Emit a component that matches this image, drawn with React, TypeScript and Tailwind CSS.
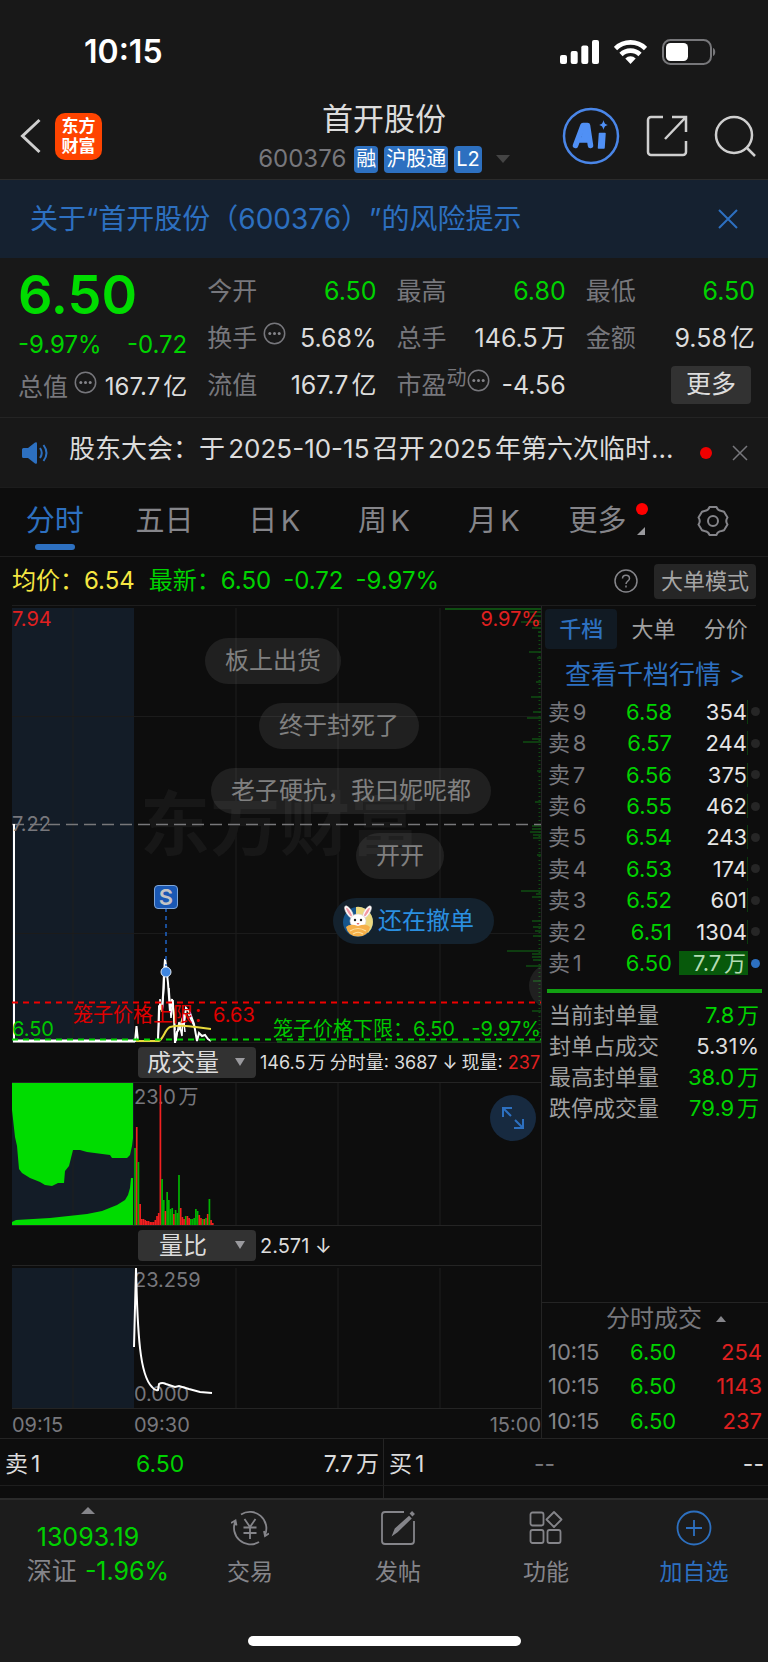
import type { ReactNode } from 'react'

interface Level {
  label: string
  price: string
  volume: string
}

const SELL_LEVELS: Level[] = [
  { label: '卖9', price: '6.58', volume: '354' },
  { label: '卖8', price: '6.57', volume: '244' },
  { label: '卖7', price: '6.56', volume: '375' },
  { label: '卖6', price: '6.55', volume: '462' },
  { label: '卖5', price: '6.54', volume: '243' },
  { label: '卖4', price: '6.53', volume: '174' },
  { label: '卖3', price: '6.52', volume: '601' },
  { label: '卖2', price: '6.51', volume: '1304' },
  { label: '卖1', price: '6.50', volume: '7.7万' },
]

const LIMIT_STATS = [
  { label: '当前封单量', value: '7.8万', color: 'text-[#00d200]' },
  { label: '封单占成交', value: '5.31%', color: 'text-[#dcdcdc]' },
  { label: '最高封单量', value: '38.0万', color: 'text-[#00d200]' },
  { label: '跌停成交量', value: '79.9万', color: 'text-[#00d200]' },
]

const TRADES = [
  { time: '10:15', price: '6.50', volume: '254' },
  { time: '10:15', price: '6.50', volume: '1143' },
  { time: '10:15', price: '6.50', volume: '237' },
]

const PERIODS = ['分时', '五日', '日K', '周K', '月K']

// price distribution on the right edge: [y, length]
const DEPTH: [number, number][] = [
  [4, 15], [8, 9], [14, 20], [20, 9], [24, 3], [28, 3], [44, 12], [50, 4], [74, 5], [89, 10],
  [104, 8], [110, 14], [131, 9], [134, 18], [163, 4], [194, 6], [218, 9], [221, 9], [224, 11],
  [227, 8], [230, 8], [247, 4], [283, 20], [286, 5], [289, 9], [313, 9], [319, 8], [323, 6],
  [328, 8], [343, 34], [346, 9], [349, 9], [352, 8], [358, 15], [373, 8], [403, 9],
]

// minute volume bars after the open: [top, rising]
const VOLUME: [number, boolean][] = [
  [65, false], [44, true], [79, false], [121, true], [136, true], [136, true], [137, true],
  [138, true], [138, true], [139, true], [139, true], [139, true], [137, true], [133, true],
  [130, true], [2, true], [96, false], [117, false], [128, true], [109, false], [117, false],
  [126, false], [125, false], [131, true], [127, false], [130, false], [92, false], [125, true],
  [134, true], [136, true], [133, false], [133, true], [135, true], [136, false], [136, false],
  [135, false], [126, false], [128, false], [132, true], [135, true], [136, false], [136, true],
  [135, false], [131, true], [116, false], [137, true], [140, true],
]

function InfoDots() {
  return (
    <svg className="h-[23px] w-[23px] shrink-0" viewBox="0 0 23 23" fill="none" stroke="#77777c">
      <circle cx="11.5" cy="11.5" r="10.2" strokeWidth="1.5" />
      <g fill="#85858a" stroke="none">
        <circle cx="6.8" cy="11.5" r="1.5" />
        <circle cx="11.5" cy="11.5" r="1.5" />
        <circle cx="16.2" cy="11.5" r="1.5" />
      </g>
    </svg>
  )
}

function StatusBar() {
  return (
    <div className="flex h-24 items-center justify-between pl-[84px] pr-[52px] pt-[7px]">
      <span className="text-[32px] font-semibold leading-none text-white">10:15</span>
      <div className="flex items-center gap-[15px]">
        <svg className="h-6 w-[39px]" viewBox="0 0 39 24" fill="#fff">
          <rect x="0" y="15" width="7" height="9" rx="2" />
          <rect x="10.7" y="11" width="7" height="13" rx="2" />
          <rect x="21.3" y="5.500" width="7" height="18.500" rx="2" />
          <rect x="32" y="0" width="7" height="24" rx="2" />
        </svg>
        <svg className="h-6 w-[33px]" viewBox="0 0 33 24" fill="none" stroke="#fff" strokeWidth="4.600">
          <path d="M1.500 8.500a21.500 21.500 0 0 1 30 0" />
          <path d="M7 14.500a13.500 13.500 0 0 1 19 0" />
          <path d="M16.500 24l-5.200-5.600a7.500 7.500 0 0 1 10.400 0z" fill="#fff" stroke="none" />
        </svg>
        <svg className="h-[26px] w-[54px]" viewBox="0 0 54 26">
          <rect x="1" y="1" width="48" height="24" rx="7.500" fill="none" stroke="#77777a" strokeWidth="2" />
          <rect x="4" y="4" width="22" height="18" rx="4.500" fill="#fff" />
          <path d="M51 9c3 1 3 7 0 8z" fill="#77777a" />
        </svg>
      </div>
    </div>
  )
}

function Tag({ children }: { children: ReactNode }) {
  return (
    <span className="flex h-[27px] items-center rounded bg-[#2d70c0] px-[2px] text-[20px] leading-none text-white">
      {children}
    </span>
  )
}

function NavBar() {
  return (
    <div className="grid h-[84px] grid-cols-[1fr_auto_1fr] items-center border-b border-[#2b2b2b] px-3 pb-[3px]">
      <div className="flex items-center gap-[13px] pl-2">
        <button type="button" aria-label="返回">
          <svg className="h-9 w-[22px]" viewBox="0 0 22 36" fill="none" stroke="#cfcfcf" strokeWidth="3">
            <path d="M19.500 2L2.500 18l17 16" />
          </svg>
        </button>
        <div className="flex h-[47px] w-[47px] flex-col items-center justify-center rounded-[10px] bg-[#ff4400] text-[17px] font-bold leading-[20px] text-white">
          <span>东方</span>
          <span>财富</span>
        </div>
      </div>
      <div className="flex flex-col items-center gap-[6px]">
        <h1 className="text-[31px] leading-10 text-[#dcdcdc]">首开股份</h1>
        <div className="flex h-7 items-center gap-[6px]">
          <span className="mr-[2px] text-[24px] text-[#77777c]">600376</span>
          <Tag>融</Tag>
          <Tag>沪股通</Tag>
          <Tag>L2</Tag>
          <svg className="ml-2 h-2 w-[14px]" viewBox="0 0 14 8" fill="#444">
            <path d="M0 0h14L7 8z" />
          </svg>
        </div>
      </div>
      <div className="flex items-center justify-end gap-[26px]">
        <button type="button" aria-label="AI 助手">
          <svg className="h-[58px] w-[58px]" viewBox="0 0 58 58" fill="#5090f5">
            <circle cx="29" cy="29" r="27" fill="none" stroke="#4a86e8" strokeWidth="2.500" />
            <path
              d="M13.500 38.500L21 18.500h4.500l3 20M17 33h10"
              fill="none"
              stroke="#5090f5"
              strokeWidth="5.500"
              strokeLinejoin="round"
              strokeLinecap="round"
            />
            <path d="M22 19h3l2 13h-8z" />
            <path d="M37.500 26.500h5.500l-1 14.500h-5.500z" stroke="#5090f5" strokeWidth="1.500" strokeLinejoin="round" />
            <path d="M41.500 13c.8 3.400 1.500 4.200 4.500 5-3 .9-3.700 1.700-4.500 5-.8-3.300-1.500-4.100-4.500-5 3-.8 3.700-1.600 4.500-5z" />
          </svg>
        </button>
        <button type="button" aria-label="分享">
          <svg className="h-[42px] w-[42px]" viewBox="0 0 42 42" fill="none" stroke="#cfcfcf" strokeWidth="2.500">
            <path d="M17 2H5a3 3 0 0 0-3 3v32a3 3 0 0 0 3 3h32a3 3 0 0 0 3-3V26" />
            <path d="M26 2h14v15M40 2L19 24" />
          </svg>
        </button>
        <button type="button" aria-label="搜索">
          <svg className="h-[42px] w-[42px]" viewBox="0 0 42 42" fill="none" stroke="#cfcfcf" strokeWidth="2.500">
            <circle cx="20" cy="20" r="18" />
            <path d="M32.500 32.500L41 41" />
          </svg>
        </button>
      </div>
    </div>
  )
}

function RiskBanner() {
  return (
    <div className="flex h-[78px] items-center justify-between bg-[#152130] pl-[30px] pr-[30px] text-[#2d70c0]">
      <a href="#risk" className="text-[28px] leading-none">
        关于“首开股份（600376）”的风险提示
      </a>
      <button type="button" aria-label="关闭提示">
        <svg className="h-5 w-5" viewBox="0 0 20 20" fill="none" stroke="currentColor" strokeWidth="2">
          <path d="M1 1l18 18M19 1L1 19" />
        </svg>
      </button>
    </div>
  )
}

interface CellProps {
  label: string
  value: string
  info?: boolean
  sup?: string
  green?: boolean
}

function QuoteCell({ label, value, info, sup, green }: CellProps) {
  return (
    <div className="flex h-[47px] items-center justify-between whitespace-nowrap text-[25px] leading-none">
      <span className="flex items-center text-[#77777c]">
        {label}
        {sup && <span className="pb-4 text-[20px]">{sup}</span>}
        {info && (
          <span className={sup ? 'pb-[10px]' : 'pb-[10px] pl-[6px]'}>
            <InfoDots />
          </span>
        )}
      </span>
      <span className={green ? 'text-[#00d200]' : 'text-[#dcdcdc]'}>{value}</span>
    </div>
  )
}

function QuotePanel() {
  return (
    <section className="grid grid-cols-4 gap-5 border-b border-[#242424] pb-2 pl-[18px] pr-[13px] pt-[10px]">
      <div>
        <div className="flex h-[54px] items-center text-[54px] font-semibold leading-none text-[#00dc00]">6.50</div>
        <div className="flex h-[46px] items-center justify-between text-[24px] text-[#00d200]">
          <span>-9.97%</span>
          <span>-0.72</span>
        </div>
        <div className="flex h-[38px] items-center justify-between whitespace-nowrap text-[25px] leading-none">
          <span className="flex items-center gap-[6px] text-[#77777c]">
            总值
            <span className="pb-[10px]">
              <InfoDots />
            </span>
          </span>
          <span className="text-[24px] text-[#dcdcdc]">167.7亿</span>
        </div>
      </div>
      <div>
        <QuoteCell label="今开" value="6.50" green />
        <QuoteCell label="换手" value="5.68%" info />
        <QuoteCell label="流值" value="167.7亿" />
      </div>
      <div>
        <QuoteCell label="最高" value="6.80" green />
        <QuoteCell label="总手" value="146.5万" />
        <QuoteCell label="市盈" sup="动" value="-4.56" info />
      </div>
      <div>
        <QuoteCell label="最低" value="6.50" green />
        <QuoteCell label="金额" value="9.58亿" />
        <div className="flex h-[45px] items-center justify-end pr-1">
          <button type="button" className="h-[38px] w-[80px] rounded bg-[#323232] text-[25px] leading-none text-[#dcdcdc]">
            更多
          </button>
        </div>
      </div>
    </section>
  )
}

function Notice() {
  return (
    <section className="flex h-[70px] items-center border-b border-[#1c1c1c] pl-[22px] pr-5">
      <svg className="h-[22px] w-[26px] shrink-0" viewBox="0 0 26 22" fill="#2d70c0">
        <path d="M0 7.500Q0 6 1.500 6H6l7-5.500q2-1 2 1v19q0 2-2 1L6 16H1.500Q0 16 0 14.500z" />
        <path d="M18 6q3.500 5 0 10M21.500 3q6 8 0 16" fill="none" stroke="#2d70c0" strokeWidth="2" />
      </svg>
      <a href="#notice" className="ml-[21px] min-w-0 flex-1 whitespace-nowrap pb-2 text-[26px] leading-none text-[#dcdcdc]">
        股东大会：于2025-10-15召开2025年第六次临时...
      </a>
      <span className="ml-4 h-3 w-3 rounded-full bg-[#f00000]" />
      <button type="button" aria-label="关闭公告" className="ml-5">
        <svg className="h-4 w-4" viewBox="0 0 16 16" fill="none" stroke="#77777c" strokeWidth="1.500">
          <path d="M1 1l14 14M15 1L1 15" />
        </svg>
      </button>
    </section>
  )
}

function PeriodTabs() {
  return (
    <nav className="grid h-[69px] grid-cols-7 border-b border-[#1e1e1e] pb-[2px] text-[29px] text-[#85858a]">
      {PERIODS.map((name, i) => (
        <button
          key={name}
          type="button"
          className={i === 0 ? 'relative text-[#2d70c0]' : 'relative'}
        >
          {name}
          {i === 0 && <span className="absolute bottom-1 left-1/2 h-[6px] w-10 -translate-x-1/2 rounded-full bg-[#2d70c0]" />}
        </button>
      ))}
      <button type="button" className="flex items-center justify-center pr-3">
        <span className="relative">
          更多
          <span className="absolute -right-[22px] top-1 h-3 w-3 rounded-full bg-[#ff0000]" />
          <svg className="absolute -right-[19px] bottom-2 h-2 w-2" viewBox="0 0 8 8" fill="#9a9a9e">
            <path d="M8 0v8H0z" />
          </svg>
        </span>
      </button>
      <button type="button" aria-label="设置" className="flex items-center justify-center">
        <svg className="h-8 w-8" viewBox="0 0 32 32" fill="none" stroke="#85858a" strokeWidth="2">
          <path
            d="M12.500 2h7q1 3.500 5 4l2.500.8 3.500 5.700q-2.500 3.500 0 7L27 25.200l-2.500.8q-4 .5-5 4h-7q-1-3.500-5-4L5 25.200 1.500 19.500q2.500-3.500 0-7L5 6.800 7.500 6q4-.5 5-4z"
            strokeLinejoin="round"
          />
          <circle cx="16" cy="16" r="5" />
        </svg>
      </button>
    </nav>
  )
}

function Summary() {
  return (
    <div className="mx-3 flex h-[49px] items-center border-b border-[#1e1e1e] text-[24px] leading-none text-[#00d200]">
      <span className="text-[#f5e642]">均价：6.54</span>
      <span className="ml-[14px]">最新：6.50</span>
      <span className="ml-3">-0.72</span>
      <span className="ml-3">-9.97%</span>
      <button type="button" aria-label="帮助" className="ml-auto">
        <svg className="h-6 w-6" viewBox="0 0 24 24" fill="none" stroke="#85858a" strokeWidth="1.500">
          <circle cx="12" cy="12" r="11" />
          <path d="M8.500 9.500c0-4.500 7-4.500 7 0 0 2.500-3.500 2.500-3.500 5.500M12 16.500v2" />
        </svg>
      </button>
      <button type="button" className="ml-4 h-[35px] rounded bg-[#262626] px-[7px] text-[22px] text-[#a5a5a5]">
        大单模式
      </button>
    </div>
  )
}

function Bubble({ className, children }: { className: string; children: ReactNode }) {
  return (
    <div className={`absolute flex h-[46px] items-center whitespace-nowrap rounded-full text-[24px] leading-none ${className}`}>
      {children}
    </div>
  )
}

function Rabbit() {
  return (
    <svg className="h-8 w-8" viewBox="0 0 32 32">
      <circle cx="16" cy="17" r="15" fill="#16558c" />
      <path d="M14 2a15 15 0 0 1 12 26L14 18z" fill="#ecd980" />
      <g fill="#fff" stroke="#d8d0d0" strokeWidth=".6">
        <ellipse cx="7" cy="7" rx="2.800" ry="7" transform="rotate(-32 7 7)" />
        <ellipse cx="25" cy="7" rx="2.800" ry="7" transform="rotate(32 25 7)" />
        <ellipse cx="16" cy="16" rx="8" ry="7" />
      </g>
      <ellipse cx="7" cy="7" rx="1.200" ry="5" fill="#f29aa5" transform="rotate(-32 7 7)" />
      <ellipse cx="25" cy="7" rx="1.200" ry="5" fill="#f29aa5" transform="rotate(32 25 7)" />
      <circle cx="13" cy="15" r="1.200" fill="#222" />
      <circle cx="19" cy="15" r="1.200" fill="#222" />
      <path d="M14.500 18h3L16 20z" fill="#d66" />
      <path d="M4 22q4-4 12-1 8-3 12 1-2 9.500-12 9.500T4 22z" fill="#f5b04a" />
      <path d="M8 26q8-5 16 0M11 29q5-3.500 10 0" stroke="#ffdf9a" strokeWidth="1.200" fill="none" />
    </svg>
  )
}

// vertical time grid shared by the three charts
function TimeGrid({ height }: { height: number }) {
  return (
    <>
      <rect width="122" height={height} fill="#131c27" />
      <path
        d={`M61 0V${height}M224 0V${height}M326 0V${height}M428 0V${height}`}
        stroke="#1f1f1f"
        strokeWidth="1"
      />
    </>
  )
}

function PriceChart() {
  return (
    <div className="relative mt-[2px] h-[435px] overflow-hidden text-[20px] leading-none">
      <svg className="absolute inset-0 h-full w-full" viewBox="0 0 529 435" preserveAspectRatio="none">
        <TimeGrid height={435} />
        <path d="M0 108.500H529M0 325.500H529M0 434.500H529" stroke="#1b1b1b" />
      </svg>
      <div className="absolute left-[128px] top-[182px] text-[70px] font-bold text-[#171717]">东方财富</div>
      <svg className="absolute inset-0 h-full w-full" viewBox="0 0 529 435" preserveAspectRatio="none" fill="none">
        <path d="M433 1H529" stroke="#0f4d12" strokeWidth="2" />
        <path d={DEPTH.map(([y, len]) => `M529 ${y}h-${len}`).join('')} stroke="#0f4d12" strokeWidth="1.300" />
        <path d="M527.500 0V435" stroke="#0f4d12" strokeWidth="2" strokeDasharray="1 3" />
        <path d="M265 434H529" stroke="#0f5a12" strokeWidth="2" />
        <path d="M0 216.500H529" stroke="#77777a" strokeWidth="1.500" strokeDasharray="12 6" />
        <path d="M1 433H123" stroke="#fff" strokeWidth="3" />
        <path
          d="M2 216V433H123L124.500 418 126 433H146L147 399 150 402 151 387 152 365 153 351 154 357 156 375 158 404 160 391 162 408 163 435 165 424 168 420 170 412 172 416 174 400 178 405 182 416 185 433 187 425 190 428 193 427 196 431 199 433"
          stroke="#fff"
          strokeWidth="2"
        />
        <path
          d="M146 433L148 391 150 404 152 380 153 352M157 380L159 410 161 392 163 422M164 433L167 414 170 428 171 405 173 424M176 405L183 420"
          stroke="#fff"
          strokeWidth="1.500"
        />
        <path d="M124 433H147C152 430 153 421 158 419C170 416 180 419 199 421" stroke="#e8da3c" strokeWidth="2" />
        <path d="M0 394.500H529" stroke="#f00000" strokeWidth="2" strokeDasharray="6 5" />
        <path d="M0 431.500H529" stroke="#00d200" strokeWidth="2" strokeDasharray="6 5" />
        <path d="M154 300V358" stroke="#1f64c8" strokeWidth="1.500" strokeDasharray="4 4" />
        <circle cx="154" cy="364" r="5" fill="#3f86e0" stroke="#dfe8f5" />
      </svg>
      <span className="absolute left-0 top-0 leading-[22px] text-[#e02020]">7.94</span>
      <span className="absolute right-0 top-0 leading-[22px] text-[#e02020]">9.97%</span>
      <span className="absolute left-0 top-[206px] text-[#77777c]">7.22</span>
      <span className="absolute left-0 top-[411px] text-[#00c800]">6.50</span>
      <span className="absolute left-[61px] top-[397px] text-[#e00000]">笼子价格上限：6.63</span>
      <span className="absolute left-[261px] top-[411px] text-[#00c800]">笼子价格下限：6.50</span>
      <span className="absolute right-0 top-[411px] text-[#00c800]">-9.97%</span>
      <span className="absolute left-[142px] top-[277px] flex h-6 w-6 items-center justify-center rounded border border-[#7fa6d8] bg-[#1a58b4] text-[22px] font-semibold text-[#c4c4c4]">
        S
      </span>
      <Bubble className="left-[193px] top-[30px] bg-[#cccccc]/10 px-5 text-[#808080]">板上出货</Bubble>
      <Bubble className="left-[247px] top-[95px] bg-[#cccccc]/10 px-5 text-[#808080]">终于封死了</Bubble>
      <Bubble className="left-[199px] top-[160px] bg-[#cccccc]/10 px-5 text-[#808080]">老子硬抗，我曰妮呢都</Bubble>
      <Bubble className="left-[344px] top-[225px] bg-[#cccccc]/10 px-5 text-[#808080]">开开</Bubble>
      <Bubble className="left-[321px] top-[290px] gap-1 bg-[#14222e] pl-[9px] pr-5 text-[#2a8fe0]">
        <Rabbit />
        还在撤单
      </Bubble>
      <span className="absolute -right-9 top-[355px] h-[46px] w-12 rounded-full bg-[#cccccc]/10" />
    </div>
  )
}

interface ToolbarProps {
  id: string
  name: string
  children: ReactNode
}

function IndicatorBar({ id, name, children }: ToolbarProps) {
  return (
    <div className="flex h-10 items-center border-b border-[#242424] pl-[126px] text-[#dcdcdc]">
      <div className="relative">
        <select
          id={id}
          aria-label="指标"
          defaultValue={name}
          className="block h-[31px] w-[118px] appearance-none rounded bg-[#323232] pr-7 text-center text-[24px] leading-none"
        >
          <option>{name}</option>
        </select>
        <svg className="pointer-events-none absolute right-[11px] top-[11px] h-2 w-[10px]" viewBox="0 0 10 8" fill="#9a9a9e">
          <path d="M0 0h10L5 8z" />
        </svg>
      </div>
      <div className="ml-1 flex items-center whitespace-nowrap leading-none">{children}</div>
    </div>
  )
}

function VolumeChart() {
  return (
    <div className="relative h-[142px] text-[20px] leading-none">
      <svg className="absolute inset-0 h-full w-full" viewBox="0 0 529 142" preserveAspectRatio="none">
        <TimeGrid height={142} />
        <path
          d="M0 0V27L3 54 5 63 7 86 10 90 18 95 28 99 33 102 40 103 46 100 52 100 53 88 57 83 59 75 61 67 68 67 75 69 98 72 100 75 115 75 118 72 120 63 121 55V0z"
          fill="#00dc00"
        />
        <path d="M0 142V139L4 137 38 135 75 131 90 128 105 122 113 117 116 112 118 105 119 95H121V142z" fill="#00dc00" />
      </svg>
      <span className="absolute left-[122px] top-1 text-[#77777c]">23.0万</span>
      <svg className="absolute inset-0 h-full w-full" viewBox="0 0 529 142" preserveAspectRatio="none">
        {VOLUME.map(([top, up], i) => (
          <rect key={i} x={122.2 + i * 1.69} y={top} width="1.700" height={142 - top} fill={up ? '#f22020' : '#00b400'} />
        ))}
      </svg>
      <button
        type="button"
        aria-label="全屏"
        className="absolute right-[5px] top-3 flex h-[46px] w-[46px] items-center justify-center rounded-full bg-[#172a40]"
      >
        <svg className="h-6 w-6" viewBox="0 0 24 24" fill="none" stroke="#2d70c0" strokeWidth="2">
          <path d="M2 11V2h9M2 2l8 8M22 13v9h-9M22 22l-8-8" />
        </svg>
      </button>
    </div>
  )
}

function RatioChart() {
  return (
    <div className="relative mt-[2px] h-[140px] text-[20px] leading-none text-[#77777c]">
      <svg className="absolute inset-0 h-full w-full" viewBox="0 0 529 140" preserveAspectRatio="none">
        <TimeGrid height={140} />
      </svg>
      <span className="absolute left-[122px] top-[2px]">23.259</span>
      <span className="absolute left-[122px] top-[116px]">0.000</span>
      <svg className="absolute inset-0 h-full w-full" viewBox="0 0 529 140" preserveAspectRatio="none">
        <path
          d="M122 79L124 0C125 45 126 62 128 80C130 98 133 112 140 119Q143 123 146 122L147 116Q150 114 154 116L163 119 167 118 177 121 188 124 200 125"
          fill="none"
          stroke="#fff"
          strokeWidth="2"
        />
      </svg>
    </div>
  )
}

function OrderBook() {
  return (
    <aside className="flex w-[227px] shrink-0 flex-col border-l border-[#242424]">
      <div className="mt-[3px] grid h-10 grid-cols-3 pl-[3px] pr-[6px] text-[22px] leading-none text-[#a0a0a0]">
        <button type="button" className="rounded bg-[#111a23] font-medium text-[#2d70c0]">千档</button>
        <button type="button">大单</button>
        <button type="button">分价</button>
      </div>
      <a href="#levels" className="flex h-[47px] items-center justify-center gap-2 pt-1 text-[26px] leading-none text-[#2d70c0]">
        查看千档行情
        <span className="text-[24px]">&gt;</span>
      </a>
      <table className="h-[283px] w-full table-fixed text-[22px] leading-none">
        <tbody>
          {SELL_LEVELS.map((row) => {
            const last = row.label === '卖1'
            return (
              <tr key={row.label}>
                <th scope="row" className="w-[58px] p-0 pl-[6px] text-left font-normal text-[#77777c]">{row.label}</th>
                <td className="p-0 text-right text-[#00d200]">{row.price}</td>
                <td className="w-[76px] p-0 pl-[7px] text-[#e6e6e6]">
                  <div className={last ? 'flex h-6 items-center justify-end bg-[#07590b] pr-[2px] text-[#b4dcb4]' : 'flex h-6 items-center justify-end border-r border-[#0c3a0e]'}>
                    {row.volume}
                  </div>
                </td>
                <td className="w-[20px] p-0">
                  <div className={last ? 'ml-[3px] h-[9px] w-[9px] rounded-full bg-[#2d70c0]' : 'ml-[3px] h-[9px] w-[9px] rounded-full bg-[#262626]'} />
                </td>
              </tr>
            )
          })}
        </tbody>
      </table>
      <div className="ml-[5px] mr-[6px] mt-[10px] h-1 bg-[#12a012]" />
      <dl className="mt-[6px] pl-[7px] pr-[9px] text-[22px] leading-none">
        {LIMIT_STATS.map((s) => (
          <div key={s.label} className="flex h-[31px] items-center justify-between">
            <dt className="text-[#a0a0a0]">{s.label}</dt>
            <dd className={s.color}>{s.value}</dd>
          </div>
        ))}
      </dl>
      <div className="mt-auto border-t border-[#242424] text-[22px] leading-none">
        <button type="button" className="flex h-8 w-full items-center justify-center gap-[14px] pl-[22px] text-[24px] text-[#77777c]">
          分时成交
          <svg className="h-[6px] w-[10px]" viewBox="0 0 10 6" fill="#85858a">
            <path d="M5 0l5 6H0z" />
          </svg>
        </button>
        <table className="h-[103px] w-full">
          <tbody>
            {TRADES.map((t, i) => (
              <tr key={i}>
                <td className="w-[88px] p-0 pl-[6px] text-[#85858a]">{t.time}</td>
                <td className="p-0 text-[#00d200]">{t.price}</td>
                <td className="w-[76px] p-0 pr-[6px] text-right text-[#e02020]">{t.volume}</td>
              </tr>
            ))}
          </tbody>
        </table>
      </div>
    </aside>
  )
}

function BestQuotes() {
  return (
    <div className="grid grid-cols-2 border-y border-t-[#242424] border-b-[#1e1e1e] text-[23px] leading-none text-[#dcdcdc]">
      <div className="grid h-[46px] grid-cols-[131px_1fr_auto] items-center border-r border-[#242424] pl-[5px] pr-1 pt-1">
        <span>卖1</span>
        <span className="text-[#00d200]">6.50</span>
        <span>7.7万</span>
      </div>
      <div className="grid h-[46px] grid-cols-[145px_1fr_auto] items-center pl-[5px] pr-1 pt-1">
        <span>买1</span>
        <span className="text-[#77777c]">--</span>
        <span>--</span>
      </div>
    </div>
  )
}

function NavItem({ label, active, children }: { label: string; active?: boolean; children: ReactNode }) {
  return (
    <button
      type="button"
      className={`flex flex-1 flex-col items-center pt-[9px] text-[23px] leading-none ${active ? 'text-[#2d70c0]' : 'text-[#85858a]'}`}
    >
      <svg className="h-[38px] w-[38px]" viewBox="0 0 38 38" fill="none" stroke="currentColor" strokeWidth="1.800">
        {children}
      </svg>
      <span className="mt-[14px]">{label}</span>
    </button>
  )
}

function BottomNav() {
  return (
    <footer className="border-t-2 border-[#2b2b2b] bg-[#1c1c1c]">
      <div className="flex h-[136px]">
        <button type="button" className="flex w-[176px] flex-col items-center pt-[7px] text-[25px] leading-none text-[#00d200]">
          <svg className="h-[7px] w-[14px]" viewBox="0 0 14 7" fill="#85858a">
            <path d="M7 0l7 7H0z" />
          </svg>
          <span className="mt-[11px]">13093.19</span>
          <span className="mt-[9px] flex items-center gap-2 pl-5">
            <span className="text-[#85858a]">深证</span>
            -1.96%
          </span>
        </button>
        <NavItem label="交易">
          <path d="M10 5.500A16.500 16.500 0 0 1 34 26M28 33A16.500 16.500 0 0 1 4.500 12M0 14l4.500-2.500 1 5M38 24.500L34 27l-1-5" />
          <path d="M13.500 10l5.500 8 5.500-8M19 18v12M12.500 18.500h13M12.500 24h13" />
        </NavItem>
        <NavItem label="发帖">
          <path d="M25 3H6a3 3 0 0 0-3 3v26a3 3 0 0 0 3 3h26a3 3 0 0 0 3-3V12" />
          <path d="M14.500 25l2-5L30 8l1.500 1.500L18 22.500z" fill="currentColor" />
          <path d="M32 6L34.500 3.500" strokeWidth="4" />
        </NavItem>
        <NavItem label="功能">
          <rect x="3.500" y="3.500" width="13" height="13" rx="2" />
          <path d="M27 3l7.500 7.500L27 18l-7.500-7.500z" strokeLinejoin="round" />
          <rect x="3.500" y="21" width="13" height="13" rx="2" />
          <rect x="20.500" y="21" width="13" height="13" rx="2" />
        </NavItem>
        <NavItem label="加自选" active>
          <circle cx="19" cy="19" r="16.500" />
          <path d="M19 11v16M11 19h16" />
        </NavItem>
      </div>
      <div className="flex h-[26px] justify-center">
        <div className="h-[10px] w-[273px] rounded-full bg-white" />
      </div>
    </footer>
  )
}

export default function App() {
  return (
    <div className="w-full bg-[#0d0d0d] font-['Inter','Noto_Sans_CJK_SC',sans-serif] [text-autospace:normal] [text-spacing-trim:space-all]">
      <header className="bg-[#181818]">
        <StatusBar />
        <NavBar />
      </header>
      <RiskBanner />
      <div className="bg-[#181818]">
        <QuotePanel />
        <Notice />
      </div>
      <PeriodTabs />
      <Summary />
      <main className="flex">
        <div className="min-w-0 flex-1 pl-3">
          <PriceChart />
          <IndicatorBar id="volume" name="成交量">
            <span className="flex gap-1 text-[18px]">
              <span>146.5万</span>
              <span>分时量: 3687 ↓</span>
              <span>现量: <span className="text-[#e02020]">237</span></span>
            </span>
          </IndicatorBar>
          <VolumeChart />
          <div className="border-t border-[#242424]">
            <IndicatorBar id="ratio" name="量比">
              <span className="text-[20px]">2.571 ↓</span>
            </IndicatorBar>
          </div>
          <RatioChart />
          <div className="grid h-[30px] grid-cols-[122px_1fr_auto] items-center border-t border-[#242424] pt-[2px] text-[20px] leading-none text-[#77777c]">
            <span>09:15</span>
            <span>09:30</span>
            <span>15:00</span>
          </div>
        </div>
        <OrderBook />
      </main>
      <BestQuotes />
      <div className="h-3 w-1/2 border-r border-[#242424]" />
      <BottomNav />
    </div>
  )
}
